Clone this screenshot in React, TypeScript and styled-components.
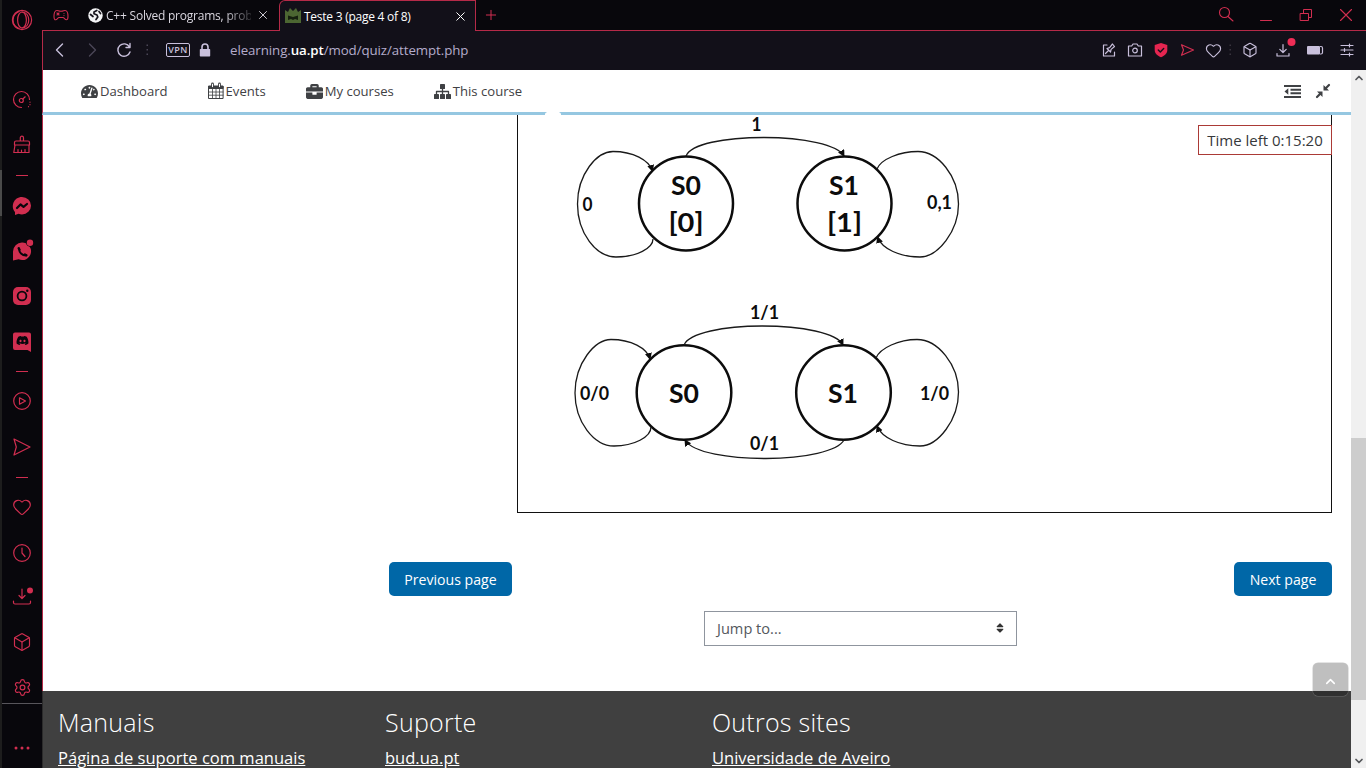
import React from "react";
import styled, { createGlobalStyle } from "styled-components";
import { Box, ChevronUp, ChevronDown, Heart, Settings, X, Plus } from "lucide-react";
import { FaTachometerAlt, FaBriefcase, FaDiscord, FaSort } from "react-icons/fa";

const red = "#d12e50";
const line = "#b52a48";
const lilac = "#c9c0dc";

const Global = createGlobalStyle`
  * { box-sizing: border-box; }
  body { margin: 0; background: #fff; overflow: hidden; font-family: "Open Sans", "Noto Sans", sans-serif; }
  svg { display: block; flex: none; }
`;

const Window = styled.div`
  width: 1366px; height: 768px; display: flex; overflow: hidden;
`;
const Edge = styled.div`
  width: 2px; background: linear-gradient(#1d1d1d 170px, #4a4a4a 170px, #4a4a4a 216px, #1d1d1d 216px);
`;
const Sidebar = styled.aside`
  width: 40px; background: #08070c; display: flex; flex-direction: column; color: ${red};
`;
const Slot = styled.div<{ $h: number; $top?: number }>`
  height: ${p => p.$h}px; padding-top: ${p => p.$top ?? 0}px; flex: none;
  display: flex; align-items: center; justify-content: center;
`;
const Dash = styled.div`width: 12px; height: 1px; background: ${red};`;
const Rule = styled.div`height: 1px; background: #57555b; flex: none;`;
const Column = styled.div`width: 1324px; display: flex; flex-direction: column;`;

const TabBar = styled.div`height: 31px; display: flex; background: #08070c; color: ${red};`;
const Strip = styled.div<{ $w?: number; $pl?: number }>`
  ${p => (p.$w ? `width: ${p.$w}px;` : "flex: 1;")}
  padding-left: ${p => p.$pl ?? 0}px; border-bottom: 1px solid ${line};
  display: flex; align-items: center;
`;
const Tab = styled.div<{ $active?: boolean }>`
  display: flex; align-items: center; font-size: 12px; color: #d9d6df;
  ${p => p.$active
    ? `width: 197px; padding-left: 5px; background: #121019; border: 1px solid ${line}; border-bottom: 0; border-radius: 6px 0 0 0; color: #fff;`
    : `width: 191px; border-bottom: 1px solid ${line};`}
`;
const TabTitle = styled.span<{ $w: number; $fade?: boolean; $ls: number }>`
  width: ${p => p.$w}px; margin-left: 3px; white-space: nowrap; letter-spacing: ${p => p.$ls}px; line-height: 18px; padding-top: 1px;
  ${p => p.$fade && "mask-image: linear-gradient(90deg, #000 118px, rgba(0,0,0,.15) 146px);"}
`;
const WinButtons = styled.div`
  margin-left: auto; display: flex; height: 30px;
`;
const Cell = styled.div<{ $w: number; $c?: string }>`
  width: ${p => p.$w}px; height: 100%; display: flex; align-items: center; justify-content: center; color: ${p => p.$c ?? "inherit"};
`;

const Toolbar = styled.div`
  height: 39px; background: #121019; border-left: 1px solid ${line}; color: ${lilac};
  display: flex; align-items: center; padding: 0 3px 1px 0;
`;
const Vpn = styled.div`
  width: 24px; height: 14px; margin-left: 12px; border: 1px solid ${lilac}; border-radius: 2px; font-size: 9px; line-height: 12px;
  text-align: center; letter-spacing: 0.4px; font-weight: 600;
`;
const Url = styled.div`
  margin-left: 10px; flex: 1; font-size: 13.3px; letter-spacing: -0.08px; color: #b4accb;
  b { font-weight: 600; color: #fff; }
`;

const View = styled.div`flex: 1; display: flex; min-height: 0;`;
const Page = styled.div`width: 1309px; position: relative; display: flex; flex-direction: column;`;
const Nav = styled.nav`
  height: 45px; border-left: 1px solid ${line}; border-bottom: 3px solid #95c7e1; background: #fff; position: relative;
  display: flex; align-items: center; color: #3f4144; font-size: 13.1px; flex: none;
`;
const Bump = styled.i`
  position: absolute; left: 502px; bottom: -3px; width: 16px; height: 4px; background: #fff; border-radius: 7px 7px 0 0 / 3px 3px 0 0;
`;
const NavLink = styled.a<{ $l: number }>`
  display: flex; align-items: center; gap: 2px; margin-left: ${p => p.$l}px; white-space: nowrap;
`;
const NavTools = styled.div`margin-left: auto; display: flex; align-items: center; gap: 15px; padding-right: 21px;`;

const Main = styled.main`
  flex: 1; border-left: 1px solid ${line}; background: #fff; padding: 0 19px 0 346px; display: flex; flex-direction: column;
`;
const Question = styled.section`
  height: 398px; flex: none; margin-left: 128px; border: 1px solid #111; border-top: 0;
`;
const Timer = styled.div`
  position: absolute; right: 19px; top: 55px; width: 134px; height: 30px; background: #fff; border: 1px solid #ab3a36;
  color: #36383b; font-size: 15px; line-height: 29px; text-align: center; white-space: nowrap;
`;
const Pager = styled.div`margin-top: 49px; display: flex; justify-content: space-between;`;
const Button = styled.button<{ $w: number }>`
  width: ${p => p.$w}px; height: 34px; padding: 1px 0 0; border: 0; border-radius: 5px; background: #0067a7; color: #fff;
  font: 14.1px/34px "Open Sans", sans-serif; white-space: nowrap;
`;
const Jump = styled.div`
  margin: 15px auto 0; width: 313px; height: 35px; border: 1px solid #8f959e; color: #54585d; font-size: 14.6px;
  display: flex; align-items: center; justify-content: space-between; padding: 0 10px 2px 12px; flex: none;
`;
const Footer = styled.footer`
  height: 77px; flex: none; background: #404040; border-left: 1px solid #2b2b2b; color: #fff; padding-left: 15px; display: flex; overflow: hidden;
`;
const FootCol = styled.div`width: 327px;`;
const FootTitle = styled.h4`margin: 14px 0 0; font-weight: 300; font-size: 25px; letter-spacing: .25px; line-height: 34px; white-space: nowrap;`;
const FootLink = styled.a`display: block; margin-top: 7px; font-size: 16.55px; line-height: 24px; text-decoration: underline; white-space: nowrap;`;
const TopButton = styled.div`
  position: absolute; right: 3px; bottom: 72px; width: 35px; height: 33px; border-radius: 5px; background: rgba(0,0,0,.25);
  box-shadow: 0 0 0 .5px rgba(150,150,150,.5); color: #fff; display: flex; align-items: center; justify-content: center; padding-top: 3px;
`;
const Scroll = styled.div`
  width: 15px; background: #f0f0f0; color: #55575a; display: flex; flex-direction: column; align-items: center;
`;
const Thumb = styled.div`width: 15px; height: 262px; margin: 353px 0 auto; background: #cdcdcd;`;
const ArrowCell = styled.div`height: 15px; display: flex; align-items: center;`;

const Svg = ({ s = 20, w = 1.2, children }: { s?: number; w?: number; children: React.ReactNode }) => (
  <svg width={s} height={s} viewBox={`0 0 ${s} ${s}`} fill="none" stroke="currentColor" strokeWidth={w} strokeLinecap="round" strokeLinejoin="round" overflow="visible">{children}</svg>
);
const Dots = ({ color = "#4b4657" }) => (
  <Svg s={14}><g fill={color} stroke="none"><rect x="6.5" y="1.5" width="1.5" height="1.5" /><rect x="6.5" y="6" width="1.5" height="1.5" /><rect x="6.5" y="10.5" width="1.5" height="1.5" /></g></Svg>
);
const Download = ({ s, dot }: { s: number; dot: React.ReactNode }) => (
  <Svg s={s}>
    <path d={s === 20 ? "M10 1v9.500M7 7.500l3 3 3-3M1.500 13v1.500a1.500 1.500 0 0 0 1.500 1.500h14a1.500 1.500 0 0 0 1.500-1.500V13" : "M8 2.5v8M4.8 7.4L8 10.5l3.2-3.1M2 11.5v2.5h12v-2.5"} />{dot}
  </Svg>
);

const DiscordFace = styled.span`margin-left: -16.5px; margin-right: 3.5px; margin-top: -3px; color: #08070c; display: flex;`;

const SideIcons = () => (
  <Sidebar>
    <Slot $h={40}><Svg><circle cx="10" cy="10" r="9.6" /><ellipse cx="10" cy="10" rx="4.4" ry="8" /><path d="M10 2c9 0 9 16 0 16M7 1.5C-1 5-1 15 7 18.5" /></Svg></Slot>
    <Slot $h={37} />
    <Slot $h={45}><Svg><path d="M9.500 17.500A8 8 0 1 1 17.500 9.500M18 12v.2M18 14.500v.2M16.500 16.500v.2" /><circle cx="9.300" cy="10.500" r="2" /><path d="M10.800 9l2.400-2.200" /></Svg></Slot>
    <Slot $h={46}><Svg><path d="M8.300 6V2.800a1.500 1.500 0 0 1 3.200 0V6M4 6h12c1 0 1.500.6 1.500 1.500V10h-15V7.500C2.500 6.600 3 6 4 6zM3 10L1.800 17.500H17L17 10M6 14.500v2.800M9.500 15V17M13 14.500v3" /></Svg></Slot>
    <Slot $h={14}><Dash /></Slot>
    <Slot $h={47}><Svg><path d="M10 1a9 8.700 0 0 1 0 17.400c-1.300 0-2.300-.2-3.400-.6L3 19v-3C-1.600 10.800 1.500 1 10 1z" fill="currentColor" stroke="none" /><path d="M5 12l3.500-3.600 3 2.500L15 8" stroke="#08070c" strokeWidth="2.200" /></Svg></Slot>
    <Slot $h={44}><Svg><path d="M10 1.500a8.800 8.800 0 1 1-3.400 16.800L1 19.500V10.500A9 9 0 0 1 10 1.500z" fill="currentColor" stroke="none" /><path d="M7 7.500c0 4 3 7 7 7" stroke="#08070c" strokeWidth="1.800" /><path d="M6.700 7.200l.8 1.500M12.900 13.500l1.500.8" stroke="#08070c" strokeWidth="2.400" /><circle cx="18" cy="1.800" r="3.800" fill="#08070c" stroke="none" /><circle cx="18" cy="1.800" r="3.200" fill="currentColor" stroke="none" /></Svg></Slot>
    <Slot $h={46}><Svg><rect x="1" y="1" width="18" height="18" rx="5" fill="currentColor" stroke="none" /><circle cx="10" cy="10" r="4.400" stroke="#08070c" strokeWidth="1.800" /><circle cx="15.300" cy="4.700" r="1.200" fill="#08070c" stroke="none" /></Svg></Slot>
    <Slot $h={46}><Svg><path d="M3 .5h14a2 2 0 0 1 2 2V20l-3.500-2H3a2 2 0 0 1-2-2V2.500a2 2 0 0 1 2-2z" fill="currentColor" stroke="none" /></Svg><DiscordFace><FaDiscord size={13} /></DiscordFace></Slot>
    <Slot $h={13}><Dash /></Slot>
    <Slot $h={46}><Svg><circle cx="10" cy="10" r="8.300" /><path d="M7.500 6.800l6 3.200-6 3.200z" /></Svg></Slot>
    <Slot $h={46}><Svg><path d="M2 2l16 8-16 8 2.300-8z" /></Svg></Slot>
    <Slot $h={14}><Dash /></Slot>
    <Slot $h={46}><Heart size={20} strokeWidth={1.4} /></Slot>
    <Slot $h={45}><Svg><circle cx="10" cy="10" r="8.300" /><path d="M10 5v5l3 3.500" /></Svg></Slot>
    <Slot $h={45}><Download s={20} dot={<circle cx="18" cy="2.500" r="3" fill="currentColor" stroke="none" />} /></Slot>
    <Slot $h={43}><Box size={20} strokeWidth={1.4} /></Slot>
    <Slot $h={40} $top={9}><Settings size={19} strokeWidth={1.5} /></Slot>
    <Rule />
    <Slot $h={64} $top={24}><Svg><g fill="currentColor" stroke="none"><circle cx="4" cy="10" r="1.500" /><circle cx="10" cy="10" r="1.500" /><circle cx="16" cy="10" r="1.500" /></g></Svg></Slot>
  </Sidebar>
);

const Browser = () => (
  <>
    <TabBar>
      <Strip $w={46} $pl={11}>
        <Svg s={16} w={1.1}><path d="M4 3.500c1 0 2 .8 4 .8s3-.8 4-.8c2.500 0 3 3 3 6 0 2-.6 3.300-1.700 3.300-1.500 0-2-2.300-3.300-2.300H6c-1.300 0-1.800 2.300-3.300 2.300C1.600 12.800 1 11.500 1 9.500c0-3 .5-6 3-6zM4 6l2 2M6 6L4 8M11 6.500v.1M11 8.500v.1" /></Svg>
      </Strip>
      <Tab>
        <Svg s={15}><circle cx="7.500" cy="7.500" r="7.200" fill="#f4f4f6" stroke="none" /><path d="M8.800 2.500L6 4v1.800l3 1.200.8 2L8 11.500M2.500 6.500L5 8.500M11 3.500l1.500 2" stroke="#16131c" strokeWidth="1.700" /></Svg>
        <TabTitle $w={145} $fade $ls={-0.22}>C++ Solved programs, prob</TabTitle>
        <Cell $w={24}><X size={14} strokeWidth={1.6} /></Cell>
      </Tab>
      <Tab $active>
        <Svg s={16}><path d="M0 15V2l3 2 2-4 3 3 3-3 2 4 3-2v13z" fill="#4c6632" stroke="none" /><path d="M3 7.500l5 1.500 5-1.500v4.500l-3-1-2 1-2-1-3 1z" fill="#16200f" stroke="none" /></Svg>
        <TabTitle $w={144} $ls={-0.25}>Teste 3 (page 4 of 8)</TabTitle>
        <Cell $w={24}><X size={15} strokeWidth={1.6} /></Cell>
      </Tab>
      <Strip>
        <Cell $w={29}><Plus size={16} strokeWidth={1.500} /></Cell>
        <WinButtons>
          <Cell $w={40}><Svg s={16} w={1.100}><circle cx="6.500" cy="5.500" r="5" /><path d="M10 9.500l5 4.500" /></Svg></Cell>
          <Cell $w={40}><Svg s={14} w={1}><path d="M1.500 12.500h11" /></Svg></Cell>
          <Cell $w={40}><Svg s={14} w={1}><path d="M1.500 5.500h8v7h-8zM4.500 5.500v-4h8v8h-3" /></Svg></Cell>
          <Cell $w={40}><Svg s={14} w={1.100}><path d="M1.500 1.500l11 11M12.500 1.500l-11 11" /></Svg></Cell>
        </WinButtons>
      </Strip>
    </TabBar>
    <Toolbar>
      <Cell $w={33}><Svg s={14} w={1.400}><path d="M9.500 1L3.500 7l6 6" /></Svg></Cell>
      <Cell $w={32} $c="#4b4657"><Svg s={14} w={1.400}><path d="M4.500 1l6 6-6 6" /></Svg></Cell>
      <Cell $w={32}><Svg s={14} w={1.400}><path d="M12.500 4A6.200 6.200 0 1 0 13 9M13 .5V4.500H9" /></Svg></Cell>
      <Cell $w={14}><Dots /></Cell>
      <Vpn>VPN</Vpn>
      <Cell $w={30}><Svg s={14}><path d="M2.500 6h9a.7.7 0 0 1 .7.7v6a.7.7 0 0 1-.7.7h-9a.7.7 0 0 1-.7-.7v-6a.7.7 0 0 1 .7-.7z" fill="currentColor" stroke="none" /><path d="M4 6.500V4a3 3 0 0 1 6 0v2.500" strokeWidth="1.600" /></Svg></Cell>
      <Url>elearning.<b>ua.pt</b>/mod/quiz/attempt.php</Url>
      <Cell $w={26}><Svg s={14} w={1.200}><path d="M5 2H1.500v11h11V9M3.500 10.500l3-3M5 5.500l3.500 3.500.6-2.600L12.500 3.500 10.500 1 7.600 4.600z" /></Svg></Cell>
      <Cell $w={26}><Svg s={14} w={1.200}><path d="M.5 3h3.200L5 1h4l1.300 2h3.200v10H.5z" /><circle cx="7" cy="7.500" r="2.300" /></Svg></Cell>
      <Cell $w={26} $c="#e52550"><Svg s={14}><path d="M7 0l6.300 2v5c0 3.500-3 6-6.300 7.300C3.700 13 .7 10.500.7 7V2z" fill="currentColor" stroke="none" /><path d="M4.300 7l2 2 3.400-3.600" stroke="#121019" strokeWidth="1.400" /></Svg></Cell>
      <Cell $w={26} $c={red}><Svg s={14} w={1.200}><path d="M1.500 1.800l12 5.200-12 5.200 2-5.200z" /></Svg></Cell>
      <Cell $w={26}><Heart size={17} strokeWidth={1.600} /></Cell>
      <Cell $w={8}><Dots color="#39343f" /></Cell>
      <Cell $w={32}><Box size={16} strokeWidth={1.700} /></Cell>
      <Cell $w={33}><Download s={16} dot={<circle cx="16.500" cy="0" r="4" fill="#ef2d56" stroke="none" />} /></Cell>
      <Cell $w={32}><Svg s={16}><rect x="0" y="4" width="13" height="8.500" rx="1" fill="currentColor" stroke="none" /><path d="M13.500 4.500h.5c1.200 0 1.500.5 1.500 1.500v4.500c0 1-.3 1.500-1.500 1.500h-.5" /></Svg></Cell>
      <Cell $w={32}><Svg s={14} w={1.200}><path d="M1 2.500h12M1 7h12M1 11.500h12M9.500 1v3M4.500 5.500v3M9.500 10v3" /></Svg></Cell>
    </Toolbar>
  </>
);

const Calendar = () => (
  <Svg s={16} w={1}>
    <path d="M.9 3.500h14.200v12H.9z" /><path d="M1 9h14M1 12.200h14M4.500 6v9.500M8 6v9.500M11.500 6v9.500" strokeWidth=".8" /><path d="M.9 3h14.200v2.500H.9z" fill="currentColor" /><path d="M4.500 1v3M11.500 1v3" strokeWidth="2.800" /><path d="M4.500 1.200v2.500M11.500 1.200v2.500" stroke="#fff" strokeWidth="1" />
  </Svg>
);
const Sitemap = () => (
  <Svg s={17} w={1.300}>
    <g fill="currentColor" stroke="none"><rect x="6" y="1" width="5" height="5" rx=".6" /><rect x="0" y="11" width="5" height="5" rx=".6" /><rect x="6" y="11" width="5" height="5" rx=".6" /><rect x="12" y="11" width="5" height="5" rx=".6" /></g>
    <path d="M8.500 6v5M2.500 11V8.500h12V11" />
  </Svg>
);
const Outdent = () => (
  <Svg s={17}>
    <path d="M0 2h17v2H0zM6.500 5.700h10.500v2H6.500zM6.500 9.300h10.500v2H6.500zM0 13h17v2H0zM4.300 5.300v6.400L.5 8.500z" fill="currentColor" stroke="none" />
  </Svg>
);
const Compress = () => (
  <Svg s={14} w={2.200}>
    <path d="M13 1L9.500 4.500M1 13l3.500-3.500" /><path d="M7.500 1v5.500H13zM6.500 13V7.500H1z" fill="currentColor" stroke="none" />
  </Svg>
);

type LabelProps = { x: number; y: number; size: number; w: number; children: string };
const Label = ({ x, y, size, w, children }: LabelProps) => (
  <text x={x - w / 2} y={y} fontSize={size} textLength={w} lengthAdjust="spacingAndGlyphs">{children}</text>
);
const Arc = ({ d }: { d: string }) => (
  <path d={d} fill="none" stroke="#1a1a1a" strokeWidth="1.300" markerEnd="url(#tip)" />
);
const Diagram = () => (
  <svg width="813" height="397" viewBox="518 115 813 397" overflow="visible" fontFamily="Lato, sans-serif" fontWeight="700" fill="#0c0c0c">
    <defs>
      <marker id="tip" markerUnits="userSpaceOnUse" markerWidth="8" markerHeight="8" refX="6" refY="3.500" orient="auto"><path d="M0 0l7 3.500L0 7z" fill="#0c0c0c" /></marker>
    </defs>
    <g fill="none" stroke="#0c0c0c" strokeWidth="2.500">
      <circle cx="686" cy="203.500" r="47" /><circle cx="844.500" cy="203.500" r="47" />
      <circle cx="684" cy="392.500" r="47.300" /><circle cx="843.500" cy="392.500" r="47.300" />
    </g>
    <Arc d="M653 239C653 248 637 257 616 257C596 257 577.500 233 577.500 204C577.500 174 597 151.500 613 151.500C633 151.500 649 160 652.500 171" />
    <Arc d="M686 156C691 144 724 137.500 764 137.500C804 137.500 838 145 844 156" />
    <Arc d="M877 169C881 159 900 151.500 918 151.500C938 151.500 958.500 176 958.500 204C958.500 231 938 257 920 257C900 257 882 249 877.500 237" />
    <Arc d="M651 427C651 437 634 446 614 446C594 446 575 422 575 393C575 363 595 339.500 611 339.500C631 339.500 647 348 650 359" />
    <Arc d="M684 345C689 333 724 326 762 326C802 326 837 333 843 345" />
    <Arc d="M876 358C880 348 899 339.500 917 339.500C938 339.500 958.500 365 958.500 392C958.500 420 938 446 920 446C900 446 882 438 877 426" />
    <Arc d="M844 440C838 451 805 458.500 766 458.500C730 458.500 693 453 685 440" />
    <Label x={686} y={195} size={27} w={30}>S0</Label><Label x={686} y={232} size={27} w={35}>[0]</Label>
    <Label x={844} y={195} size={27} w={30}>S1</Label><Label x={844.5} y={232} size={27} w={35}>[1]</Label>
    <Label x={684} y={402.500} size={27} w={30}>S0</Label><Label x={843} y={402.500} size={27} w={30}>S1</Label>
    <Label x={587.5} y={211} size={18} w={10}>0</Label><Label x={756.5} y={130.500} size={18} w={10}>1</Label>
    <Label x={939.500} y={209} size={18} w={25}>0,1</Label>
    <Label x={594.500} y={400} size={18} w={29}>0/0</Label><Label x={764.500} y={318.500} size={18} w={29}>1/1</Label>
    <Label x={764.500} y={449.500} size={18} w={29}>0/1</Label><Label x={934.500} y={400} size={18} w={29}>1/0</Label>
  </svg>
);

export default function App() {
  return (
    <Window>
      <Global />
      <Edge />
      <SideIcons />
      <Column>
        <Browser />
        <View>
          <Page>
            <Nav>
              <NavLink $l={38}><FaTachometerAlt size={17} />Dashboard</NavLink>
              <NavLink $l={40}><Calendar />Events</NavLink>
              <NavLink $l={40}><FaBriefcase size={17} />My courses</NavLink>
              <NavLink $l={40}><Sitemap />This course</NavLink>
              <NavTools><Outdent /><Compress /></NavTools>
              <Bump />
            </Nav>
            <Main>
              <Question><Diagram /></Question>
              <Pager><Button $w={123}>Previous page</Button><Button $w={98}>Next page</Button></Pager>
              <Jump><span>Jump to...</span><FaSort size={12} color="#333" /></Jump>
            </Main>
            <Footer>
              <FootCol><FootTitle>Manuais</FootTitle><FootLink>Página de suporte com manuais</FootLink></FootCol>
              <FootCol><FootTitle>Suporte</FootTitle><FootLink>bud.ua.pt</FootLink></FootCol>
              <FootCol><FootTitle>Outros sites</FootTitle><FootLink>Universidade de Aveiro</FootLink></FootCol>
            </Footer>
            <Timer>Time left 0:15:20</Timer>
            <TopButton><ChevronUp size={15} strokeWidth={2.5} /></TopButton>
          </Page>
          <Scroll>
            <ArrowCell><ChevronUp size={12} strokeWidth={3.5} /></ArrowCell>
            <Thumb />
            <ArrowCell><ChevronDown size={12} strokeWidth={3.5} /></ArrowCell>
          </Scroll>
        </View>
      </Column>
    </Window>
  );
}
